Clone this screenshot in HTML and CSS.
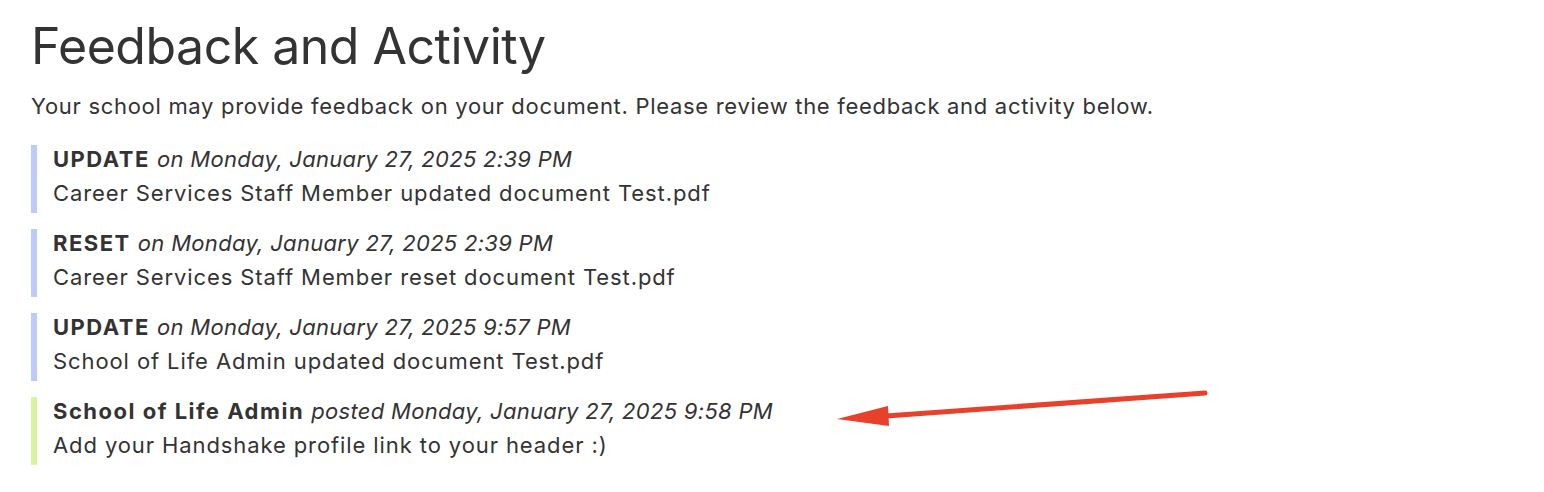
FILE: index.html
```html
<!DOCTYPE html>
<html lang="en">
<head>
  <meta charset="UTF-8" />
  <title>Feedback and Activity</title>
  <link rel="stylesheet" href="styles.css">
</head>
<body>
  <div class="page">
    <h1>Feedback and Activity</h1>
    <p class="intro">Your school may provide feedback on your document. Please review the feedback and activity below.</p>

    <div class="activity">
      <div class="entry">
        <div class="head"><b>UPDATE</b> <i>on Monday, January 27, 2025 2:39 PM</i></div>
        <div class="body">Career Services Staff Member updated document Test.pdf</div>
      </div>
      <div class="entry">
        <div class="head"><b>RESET</b> <i>on Monday, January 27, 2025 2:39 PM</i></div>
        <div class="body">Career Services Staff Member reset document Test.pdf</div>
      </div>
      <div class="entry">
        <div class="head"><b>UPDATE</b> <i>on Monday, January 27, 2025 9:57 PM</i></div>
        <div class="body">School of Life Admin updated document Test.pdf</div>
      </div>
      <div class="entry comment">
        <div class="head"><b>School of Life Admin</b> <i>posted Monday, January 27, 2025 9:58 PM</i></div>
        <div class="body">Add your Handshake profile link to your header :)</div>
      </div>
    </div>
  </div>

  <svg class="arrow" width="400" height="50" viewBox="0 0 400 50">
    <line x1="375" y1="10" x2="56" y2="33" stroke="#e8412b" stroke-width="5" stroke-linecap="round" />
    <polygon points="7,36 58,23 59,43" fill="#e8412b" />
  </svg>
</body>
</html>
```

FILE: styles.css
```css
html, body {
  margin: 0;
  padding: 0;
  background: #ffffff;
  font-family: Inter, 'Liberation Sans', sans-serif;
  color: #333333;
}

.page {
  padding: 16px 31px;
}

h1 {
  margin: 0;
  font-size: 50px;
  font-weight: 400;
  line-height: 60px;
  letter-spacing: -0.5px;
  color: #333333;
}

.intro {
  margin: 16px 0 25px;
  font-size: 22px;
  line-height: 28px;
  letter-spacing: 0.7px;
}

.activity {
  display: flex;
  flex-direction: column;
  gap: 16px;
}

.entry {
  border-left: 6px solid #bccbfb;
  padding: 0 0 3px 16px;
  font-size: 22px;
  line-height: 34px;
  letter-spacing: 0.9px;
}

.entry.comment {
  border-left-color: #d7f59a;
}

.head {
  margin-top: -3px;
}

.head b {
  font-weight: 700;
  letter-spacing: 1.5px;
}

.head i {
  letter-spacing: 0.3px;
}

.arrow {
  position: absolute;
  left: 830px;
  top: 383px;
}
```
